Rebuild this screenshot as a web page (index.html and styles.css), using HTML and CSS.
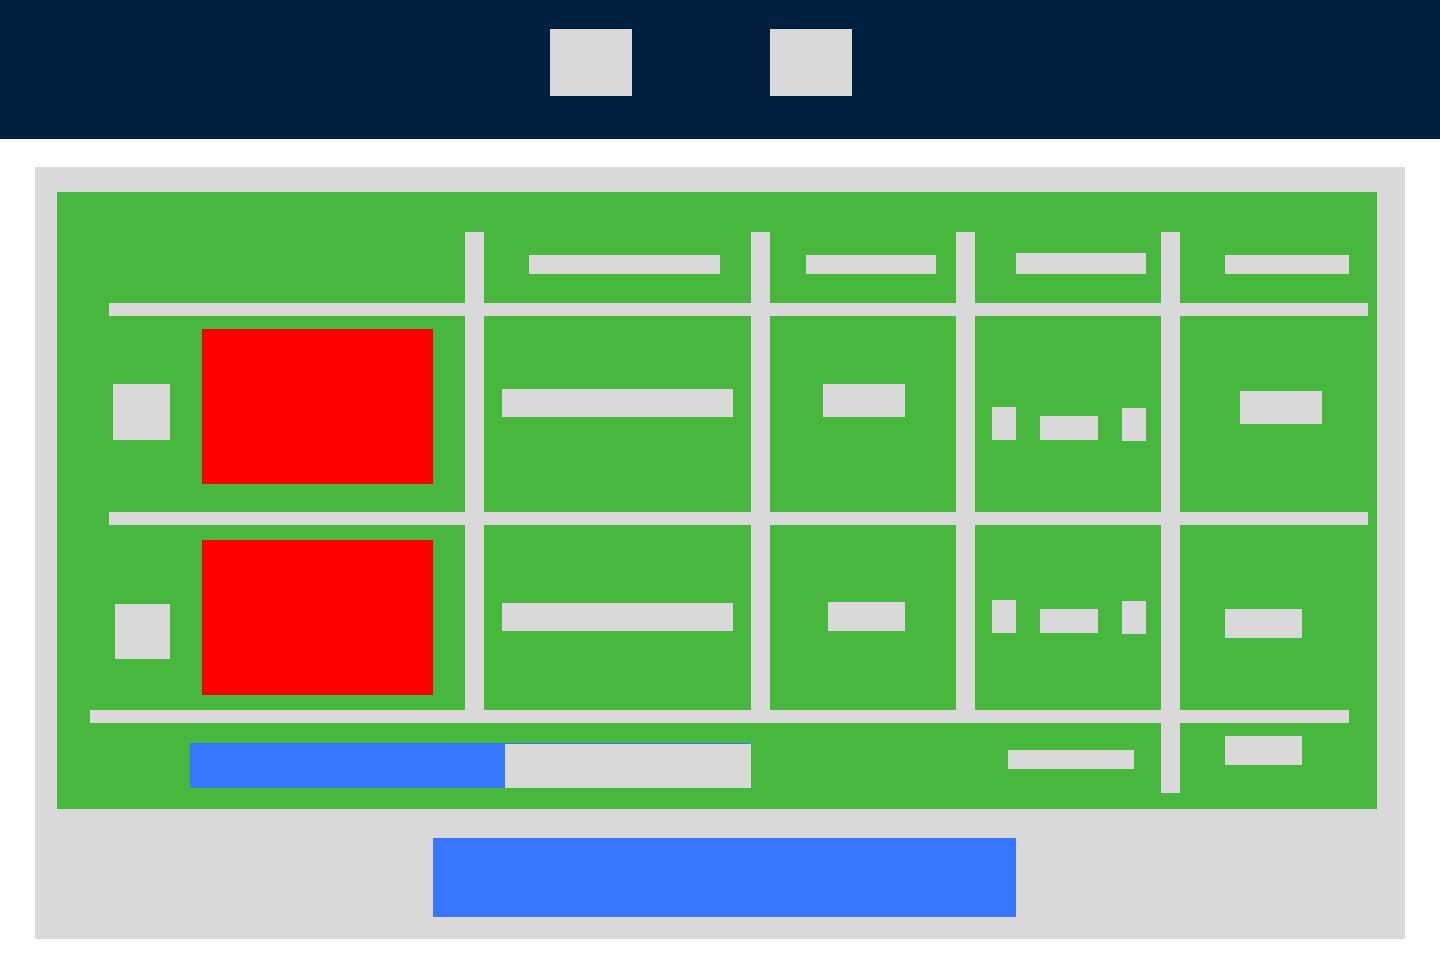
FILE: index.html
```html
<!DOCTYPE html>
<html lang="en">
<head>
<meta charset="utf-8">
<meta name="viewport" content="width=device-width, initial-scale=1">
<title>Cart</title>
<link rel="stylesheet" href="styles.css">
</head>
<body>
<header class="site-header">
  <a class="nav-tile" href="#home" aria-label="Home"></a>
  <a class="nav-tile" href="#cart" aria-label="Cart"></a>
</header>

<main class="cart">
  <section class="sheet" aria-label="Cart items">
    <!-- column headings -->
    <div class="cell row-head col-name"><span class="block heading"></span></div>
    <div class="cell row-head col-price"><span class="block heading"></span></div>
    <div class="cell row-head col-qty"><span class="block heading heading-tall"></span></div>
    <div class="cell row-head col-total"><span class="block heading"></span></div>

    <!-- first item -->
    <div class="cell row-one col-product">
      <button class="block remove" type="button" aria-label="Remove first item"></button>
      <div class="photo"></div>
    </div>
    <div class="cell row-one col-name"><span class="block name"></span></div>
    <div class="cell row-one col-price"><span class="block amount"></span></div>
    <div class="cell row-one col-qty">
      <button class="block step" type="button" aria-label="Decrease first item"></button>
      <span class="block count"></span>
      <button class="block step" type="button" aria-label="Increase first item"></button>
    </div>
    <div class="cell row-one col-total"><span class="block amount"></span></div>

    <!-- second item -->
    <div class="cell row-two col-product">
      <button class="block remove" type="button" aria-label="Remove second item"></button>
      <div class="photo"></div>
    </div>
    <div class="cell row-two col-name"><span class="block name"></span></div>
    <div class="cell row-two col-price"><span class="block amount"></span></div>
    <div class="cell row-two col-qty">
      <button class="block step" type="button" aria-label="Decrease second item"></button>
      <span class="block count"></span>
      <button class="block step" type="button" aria-label="Increase second item"></button>
    </div>
    <div class="cell row-two col-total"><span class="block amount"></span></div>

    <!-- coupon and total -->
    <form class="coupon">
      <input class="coupon-code" type="text" aria-label="Coupon code">
      <button class="block coupon-apply" type="button" aria-label="Apply coupon"></button>
    </form>
    <div class="cell row-foot col-qty"><span class="block heading"></span></div>
    <div class="cell row-foot col-total"><span class="block amount"></span></div>

    <!-- rules between rows and columns -->
    <div class="block rule rule-head"></div>
    <div class="block rule rule-items"></div>
    <div class="block rule rule-foot"></div>
    <div class="block bar bar-name"></div>
    <div class="block bar bar-price"></div>
    <div class="block bar bar-qty"></div>
    <div class="block bar bar-total"></div>
  </section>

  <div class="actions">
    <button class="checkout" type="button" aria-label="Checkout"></button>
  </div>
</main>
</body>
</html>
```
FILE: styles.css
```css
:root {
  --navy: #001f3f;
  --grey: #d9d9d9;
  --green: #48b73e;
  --blue: #3777ff;
  --red: #ff0000;
}

* {
  box-sizing: border-box;
}

body {
  margin: 0;
  background: #ffffff;
  font-family: "Liberation Sans", sans-serif;
}

button,
input {
  margin: 0;
  padding: 0;
  border: 0;
  border-radius: 0;
  font: inherit;
}

.block {
  display: block;
  background: var(--grey);
}

.site-header {
  display: flex;
  justify-content: center;
  gap: 138px;
  padding: 29px 38px 43px 0;
  background: var(--navy);
}

.nav-tile {
  width: 82px;
  height: 67px;
  background: var(--grey);
}

.cart {
  margin: 28px 35px 22px;
  padding: 25px 28px 22px 22px;
  background: var(--grey);
}

.sheet {
  display: grid;
  grid-template-columns:
    19px minmax(0, 356fr)
    19px minmax(0, 267fr)
    19px minmax(0, 186fr)
    19px minmax(0, 186fr)
    19px minmax(0, 169fr)
    19px;
  grid-template-rows: 71px 13px 196px 13px 185px 13px 70px;
  padding: 40px 9px 16px 33px;
  background: var(--green);
}

.cell {
  display: flex;
  align-items: flex-start;
}

.row-head { grid-row: 1; padding-top: 23px; }
.row-one { grid-row: 3; }
.row-two { grid-row: 5; }
.row-foot { grid-row: 7; }

.col-product { grid-column: 2; }
.col-name { grid-column: 4; }
.col-price { grid-column: 6; }
.col-qty { grid-column: 8; }
.col-total { grid-column: 10; }

/* headings */
.heading {
  flex: 1;
  height: 19px;
}

.row-head.col-name { padding-left: 45px; padding-right: 31px; }
.row-head.col-price { padding-left: 36px; padding-right: 20px; }
.row-head.col-qty { padding: 21px 15px 0 41px; }
.row-head.col-total { padding-left: 45px; }

.heading-tall {
  height: 21px;
}

/* product */
.col-product {
  justify-content: space-between;
  padding-right: 32px;
}

.photo {
  width: 231px;
  height: 155px;
  background: var(--red);
}

.row-one.col-product { padding-top: 13px; padding-left: 4px; }
.row-two.col-product { padding-top: 15px; padding-left: 6px; }

.remove {
  width: 57px;
  height: 56px;
  margin-top: 55px;
}

.row-two .remove {
  width: 55px;
  height: 55px;
  margin-top: 64px;
}

/* name */
.name {
  flex: 1;
  height: 28px;
}

.row-one.col-name { padding: 73px 18px 0; }
.row-two.col-name { padding: 78px 18px 0; }

/* amounts */
.amount {
  width: 77px;
  height: 29px;
}

.row-one .amount {
  width: 82px;
  height: 33px;
}

.row-one.col-price { justify-content: flex-end; padding: 68px 51px 0 0; }
.row-two.col-price { justify-content: flex-end; padding: 77px 51px 0 0; }
.row-one.col-total { padding: 75px 0 0 60px; }
.row-two.col-total { padding: 84px 0 0 45px; }
.row-foot.col-total { padding: 13px 0 0 45px; }

/* quantity */
.row-one.col-qty { gap: 24px; padding: 91px 15px 0 17px; }
.row-two.col-qty { gap: 24px; padding: 75px 15px 0 17px; }
.row-foot.col-qty { padding: 27px 27px 0 33px; }

.step {
  width: 24px;
  height: 33px;
}

.step:last-child {
  margin-top: 1px;
}

.count {
  flex: 1;
  height: 24px;
  margin-top: 9px;
}

/* coupon */
.coupon {
  display: flex;
  grid-row: 7;
  grid-column: 2 / 5;
  height: 45px;
  margin-top: 20px;
  margin-left: 81px;
  padding-top: 1px;
  background: var(--blue);
}

.coupon-code {
  flex: 315 1 0;
  min-width: 0;
  background: var(--blue);
  color: #ffffff;
}

.coupon-apply {
  flex: 246 1 0;
}

/* rules */
.rule-head { grid-row: 2; grid-column: 2 / 12; }
.rule-items { grid-row: 4; grid-column: 2 / 12; }
.rule-foot { grid-row: 6; grid-column: 1 / 11; }

.bar-name { grid-column: 3; grid-row: 1 / 6; }
.bar-price { grid-column: 5; grid-row: 1 / 6; }
.bar-qty { grid-column: 7; grid-row: 1 / 6; }
.bar-total { grid-column: 9; grid-row: 1 / 8; }

.actions {
  display: flex;
  justify-content: center;
  padding: 29px 0 0 15px;
}

.checkout {
  width: 583px;
  height: 79px;
  background: var(--blue);
}
```
